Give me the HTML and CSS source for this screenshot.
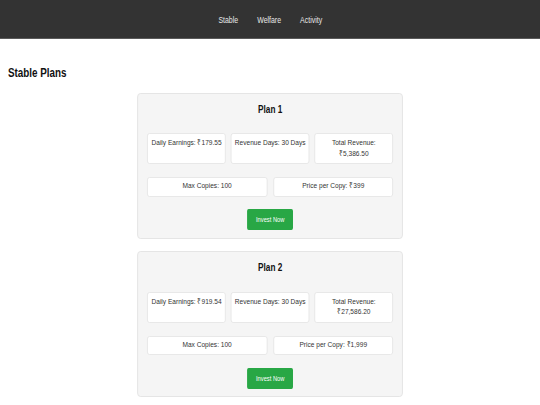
FILE: index.html
```html
<!DOCTYPE html>
<html>
<head>
<meta charset="utf-8">
<link rel="stylesheet" href="styles.css">
</head>
<body>
<nav class="navbar">
  <div class="nav-links">
    <a class="nav-link" href="#">Stable</a>
    <a class="nav-link" href="#">Welfare</a>
    <a class="nav-link" href="#">Activity</a>
  </div>
</nav>
<h2 class="page-title">Stable Plans</h2>
<main class="plans">
  <section class="plan-card">
    <h3 class="plan-title">Plan 1</h3>
    <div class="stats-row stats-three">
      <div class="stat">Daily Earnings: ₹179.55</div>
      <div class="stat">Revenue Days: 30 Days</div>
      <div class="stat">Total Revenue: ₹5,386.50</div>
    </div>
    <div class="stats-row stats-two">
      <div class="stat">Max Copies: 100</div>
      <div class="stat">Price per Copy: ₹399</div>
    </div>
    <div class="actions"><button class="invest-btn">Invest Now</button></div>
  </section>
  <section class="plan-card">
    <h3 class="plan-title">Plan 2</h3>
    <div class="stats-row stats-three">
      <div class="stat">Daily Earnings: ₹919.54</div>
      <div class="stat">Revenue Days: 30 Days</div>
      <div class="stat">Total Revenue: ₹27,586.20</div>
    </div>
    <div class="stats-row stats-two">
      <div class="stat">Max Copies: 100</div>
      <div class="stat">Price per Copy: ₹1,999</div>
    </div>
    <div class="actions"><button class="invest-btn">Invest Now</button></div>
  </section>
</main>
</body>
</html>
```

FILE: styles.css
```css
* { box-sizing: border-box; }
body {
  margin: 0;
  font-family: "Liberation Sans", Arial, Helvetica, sans-serif;
  color: #333;
  background: #fff;
}
.navbar {
  height: 39px;
  background: #333;
  border-bottom: 1px solid #5a5a5a;
  display: flex;
  justify-content: center;
  align-items: center;
  padding-top: 1px;
}
/* the page text is set narrow (condensed) */
.nav-links {
  display: flex;
  gap: 23.2px;
  transform: scaleX(0.82);
  transform-origin: 50% 50%;
}
.nav-link {
  color: #e8e8e8;
  text-decoration: none;
  font-size: 8.5px;
}
.page-title {
  margin: 27px 0 0 8px;
  font-size: 12px;
  line-height: 14px;
  font-weight: bold;
  color: #111;
  transform: scaleX(0.82);
  transform-origin: 0 0;
}
.plans {
  width: 324.4px;
  margin: 12.5px auto 0;
  transform: scaleX(0.82);
  transform-origin: 50% 0;
}
.plan-card {
  background: #f5f5f5;
  border: 1px solid #e2e2e2;
  border-radius: 4px;
  padding: 9px 11px 7.5px;
  margin-bottom: 12.5px;
}
.plan-title {
  margin: 0 0 17.5px;
  font-size: 10px;
  line-height: 13px;
  font-weight: bold;
  text-align: center;
  color: #111;
}
.stats-row {
  display: grid;
}
.stats-three {
  grid-template-columns: repeat(3, 1fr);
  gap: 5.5px;
}
.stats-two {
  grid-template-columns: repeat(2, 1fr);
  gap: 7.3px;
  margin-top: 13px;
}
.stat {
  background: #fff;
  border: 1px solid #e6e6e6;
  border-radius: 3px;
  padding: 4px 2.4px;
  font-size: 8px;
  line-height: 10.5px;
  text-align: center;
  color: #333;
}
.stats-two .stat {
  padding: 3px 2.4px 4px;
}
.actions {
  display: flex;
  justify-content: center;
  margin-top: 12.5px;
}
.invest-btn {
  background: #28a745;
  color: #fff;
  border: none;
  border-radius: 2px;
  font-family: inherit;
  font-size: 7px;
  line-height: 9px;
  padding: 6px 10.4px;
  height: 21px;
}
```
